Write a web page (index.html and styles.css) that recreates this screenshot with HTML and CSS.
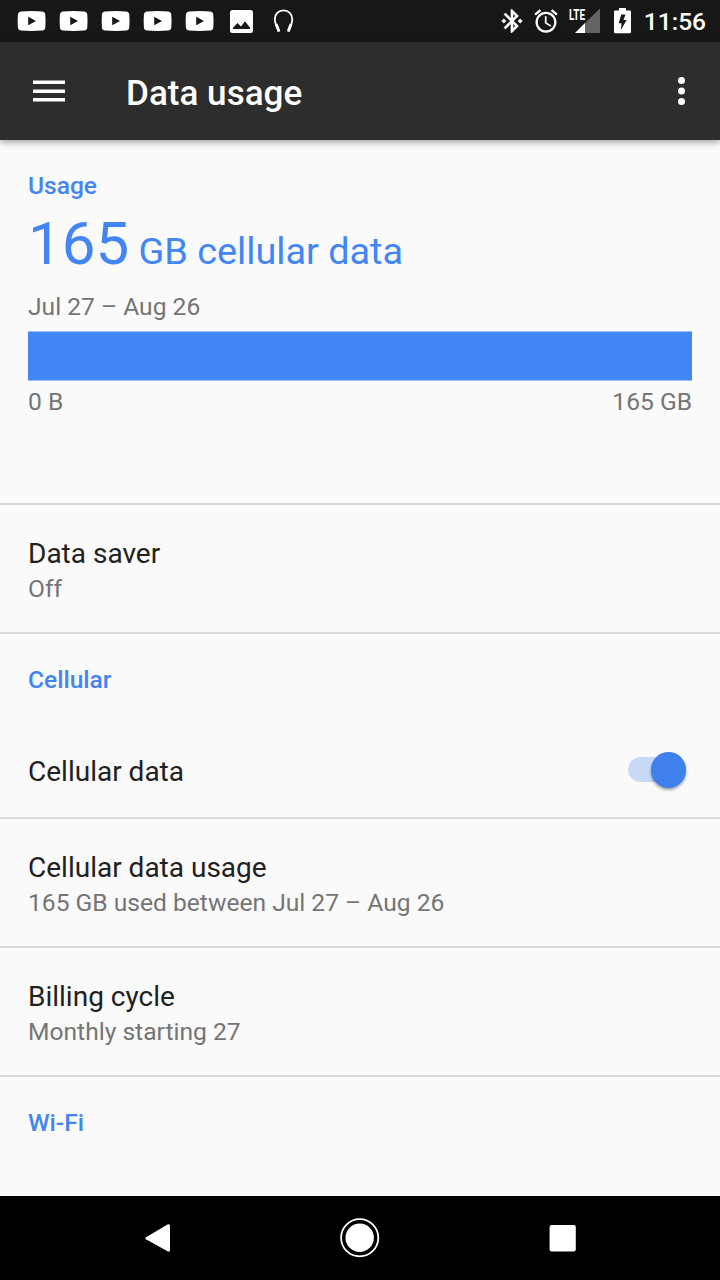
FILE: index.html
```html
<!DOCTYPE html>
<html lang="en">
<head>
<meta charset="utf-8">
<title>Data usage</title>
<link rel="stylesheet" href="styles.css">
</head>
<body>
<svg width="0" height="0" class="defs">
  <symbol id="video" viewBox="0 0 30 22"><path fill="#fff" fill-rule="evenodd" d="M4.200 1.400Q14.600 .7 25 1.400Q28 1.600 28.300 4.500Q28.800 11 28.300 17.500Q28 20.400 25 20.600Q14.600 21.300 4.200 20.600Q1.200 20.400 .9 17.500Q.4 11 .9 4.500Q1.200 1.600 4.200 1.400ZM11.200 6.800V15.200L19 11Z"/></symbol>
</svg>
<div class="phone">
  <header class="status">
    <div class="notifications">
      <svg class="video"><use href="#video"/></svg>
      <svg class="video"><use href="#video"/></svg>
      <svg class="video"><use href="#video"/></svg>
      <svg class="video"><use href="#video"/></svg>
      <svg class="video"><use href="#video"/></svg>
      <svg class="picture" viewBox="0 0 23 23"><path fill="#fff" fill-rule="evenodd" d="M2.500 0H20.500Q23 0 23 2.500V20.500Q23 23 20.500 23H2.500Q0 23 0 20.500V2.500Q0 0 2.500 0ZM3 19H20V17.800L15 11.200L11 16.600L7.500 13L3 17.800Z"/></svg>
      <svg class="headset" viewBox="0 0 20 24"><path fill="none" stroke="#fff" stroke-width="1.800" d="M5.800 22.500C4.500 18.500 1.800 15.500 1.800 10.200C1.800 4.800 5.800 1.400 10.600 1.400S19.300 4.800 19.300 10.200C19.300 15.500 16.700 18.500 15.400 22.500"/><path fill="none" stroke="#fff" stroke-width="2.800" d="M5.800 22.500C5.300 19.800 4.100 17.600 3.100 15M15.400 22.500C15.900 19.800 17.100 17.600 18.100 15"/></svg>
    </div>
    <div class="indicators">
      <svg class="bluetooth" viewBox="0 0 24 24"><path fill="#fff" stroke="#fff" stroke-width=".25" d="M7 12l-2-2-2 2 2 2 2-2zm10.710-4.290L12 2h-1v7.590L6.410 5 5 6.410 10.590 12 5 17.590 6.410 19 11 14.410V22h1l5.710-5.710-4.300-4.290 4.300-4.290zM13 5.830l1.880 1.880L13 9.590V5.830zm1.880 10.460L13 18.170v-3.760l1.880 1.880zM19 10l-2 2 2 2 2-2-2-2z"/></svg>
      <svg class="alarm" viewBox="0 0 24 24"><path fill="#fff" d="M22 5.720l-4.600-3.860-1.290 1.530 4.600 3.860L22 5.720zM7.880 3.390L6.600 1.860 2 5.710l1.290 1.530 4.590-3.850zM12.500 8H11v6l4.750 2.850.75-1.230-4-2.370V8zM12 4c-4.970 0-9 4.030-9 9s4.020 9 9 9c4.970 0 9-4.030 9-9s-4.030-9-9-9zm0 16c-3.870 0-7-3.130-7-7s3.130-7 7-7 7 3.130 7 7-3.130 7-7 7z"/></svg>
      <svg class="signal" viewBox="0 0 32 30"><path fill="#646464" d="M31 4.500V29H16V19Z"/><path fill="#fff" d="M6 29L16 19V29Z"/><text x="0" y="16" textLength="16" lengthAdjust="spacingAndGlyphs">LTE</text></svg>
      <svg class="battery" viewBox="0 0 17 26"><path fill="#fff" fill-rule="evenodd" d="M5 0H12V2.500H15.800Q17 2.500 17 3.700V24Q17 25.300 15.800 25.300H1.200Q0 25.300 0 24V3.700Q0 2.500 1.200 2.500H5ZM7.300 6.500L4.700 15.300H7.600L6.900 22L12.600 12H9.400L11.600 6.500Z"/></svg>
      <span class="clock">11:56</span>
    </div>
  </header>
  <div class="appbar">
    <svg class="menu" viewBox="0 0 32 22"><path fill="#fff" d="M0 .4H32V3.900H0ZM0 9.400H32V12.900H0ZM0 18.100H32V21.600H0Z"/></svg>
    <h1 class="title">Data usage</h1>
    <svg class="more" viewBox="0 0 8 28"><circle cx="3.500" cy="3.600" r="3.500" fill="#fff"/><circle cx="3.500" cy="14" r="3.500" fill="#fff"/><circle cx="3.500" cy="24.400" r="3.500" fill="#fff"/></svg>
  </div>
  <main class="content">
    <section class="usage">
      <h2 class="category">Usage</h2>
      <p class="total"><span class="amount">165</span> <span class="unit">GB cellular data</span></p>
      <p class="detail period">Jul 27 – Aug 26</p>
      <div class="bar"></div>
      <div class="detail scale"><span>0 B</span><span>165 GB</span></div>
    </section>
    <section class="row">
      <p class="name">Data saver</p>
      <p class="detail">Off</p>
    </section>
    <section class="cellular">
      <h2 class="category">Cellular</h2>
      <div class="setting">
        <p class="name">Cellular data</p>
        <div class="switch"><div class="thumb"></div></div>
      </div>
    </section>
    <section class="row">
      <p class="name">Cellular data usage</p>
      <p class="detail">165 GB used between Jul 27 – Aug 26</p>
    </section>
    <section class="row">
      <p class="name">Billing cycle</p>
      <p class="detail">Monthly starting 27</p>
    </section>
    <section class="wifi"><h2 class="category">Wi-Fi</h2></section>
  </main>
  <nav class="navbar">
    <svg class="back" viewBox="0 0 26 30"><path fill="#fff" d="M1 14.200L22.500 1.600Q25 .4 25 2.900V27Q25 29.500 22.500 28.300L1 16.200Q-.4 15.200 1 14.200Z"/></svg>
    <svg class="home" viewBox="0 0 40 40"><circle cx="19.700" cy="19.700" r="18.600" fill="none" stroke="#fff" stroke-width="1.800"/><circle cx="19.700" cy="19.700" r="14.200" fill="#fff"/></svg>
    <svg class="recent" viewBox="0 0 28 28"><rect x=".6" y=".1" width="26.200" height="26.300" rx="1.800" fill="#fff"/></svg>
  </nav>
</div>
</body>
</html>
```

FILE: styles.css
```css
* { box-sizing: border-box; margin: 0; padding: 0; }
body { width: 720px; height: 1280px; overflow: hidden; font-family: Roboto, sans-serif; background: #fafafa; }
svg { display: block; flex: none; }
.defs { position: absolute; }
.phone { width: 720px; height: 1280px; display: flex; flex-direction: column; }
.status { height: 42px; background: #171717; display: flex; justify-content: space-between; padding: 0 14px 0 17px; color: #fff; }
.notifications, .indicators { display: flex; align-items: flex-start; }
.video { width: 30px; height: 22px; margin: 10px 12px 0 0; }
.picture { width: 23px; height: 23px; margin: 10px 0 0 3px; }
.headset { width: 20px; height: 24px; margin: 9px 0 0 20px; overflow: visible; }
.bluetooth { width: 28px; height: 28px; margin-top: 7px; }
.alarm { width: 28px; height: 28px; margin: 7px 0 0 6px; }
.signal { width: 32px; height: 30px; margin: 4px 0 0 9px; overflow: visible; }
.signal text { font: 700 14px Roboto, sans-serif; fill: #fff; }
.battery { width: 17px; height: 26px; margin: 8px 0 0 13px; }
.clock { font-size: 24.5px; font-weight: 500; line-height: 28px; margin: 8px 0 0 13px; }
.appbar { height: 98px; background: #2d2d2d; color: #fff; display: flex; align-items: center; padding: 0 34px 0 33px; box-shadow: 0 2px 7px rgba(0,0,0,.38); position: relative; z-index: 1; flex: none; }
.menu { width: 32px; height: 22px; }
.title { font-size: 35.1px; line-height: 42px; font-weight: 500; margin: 3px auto 0 61px; }
.more { width: 8px; height: 28px; }
.content { flex: 1; }
.category { font-size: 24.55px; line-height: 28px; font-weight: 500; color: #4285f4; }
.detail { font-size: 24.6px; line-height: 28px; color: #757575; }
.name { font-size: 28px; line-height: 34px; color: #212121; }
.usage { height: 365px; padding: 32px 28px 0; border-bottom: 2px solid #dadada; }
.total { color: #4285f4; height: 70px; line-height: 70px; margin-top: 9px; font-size: 37.8px; white-space: nowrap; }
.amount { font-size: 60px; }
.period { margin-top: 14px; }
.bar { height: 50px; margin-top: 10px; background: #4285f4; border: solid #9ec0f7; border-width: 1px 0; }
.scale { display: flex; justify-content: space-between; margin-top: 7px; }
.row { height: 129px; padding: 32px 28px 0; border-bottom: 2px solid #dadada; }
.row .detail { margin-top: 4px; }
.cellular { height: 185px; padding: 32px 28px 0; border-bottom: 2px solid #dadada; }
.setting { display: flex; justify-content: space-between; align-items: center; margin-top: 61px; height: 34px; }
.switch { width: 50px; height: 25px; margin: -5px 14px 0 0; border-radius: 13px; background: #c7dbf9; }
.thumb { width: 35.5px; height: 35.5px; border-radius: 50%; background: #4080ec; margin: -5px 0 0 22.5px; box-shadow: 0 2px 3px rgba(0,0,0,.35); }
.wifi { padding: 32px 28px 0; }
.navbar { height: 84px; background: #000; display: flex; align-items: center; padding-left: 145px; }
.back { width: 26px; height: 30px; }
.home { width: 40px; height: 40px; margin-left: 169px; }
.recent { width: 28px; height: 28px; margin: 2px 0 0 169px; }
```
